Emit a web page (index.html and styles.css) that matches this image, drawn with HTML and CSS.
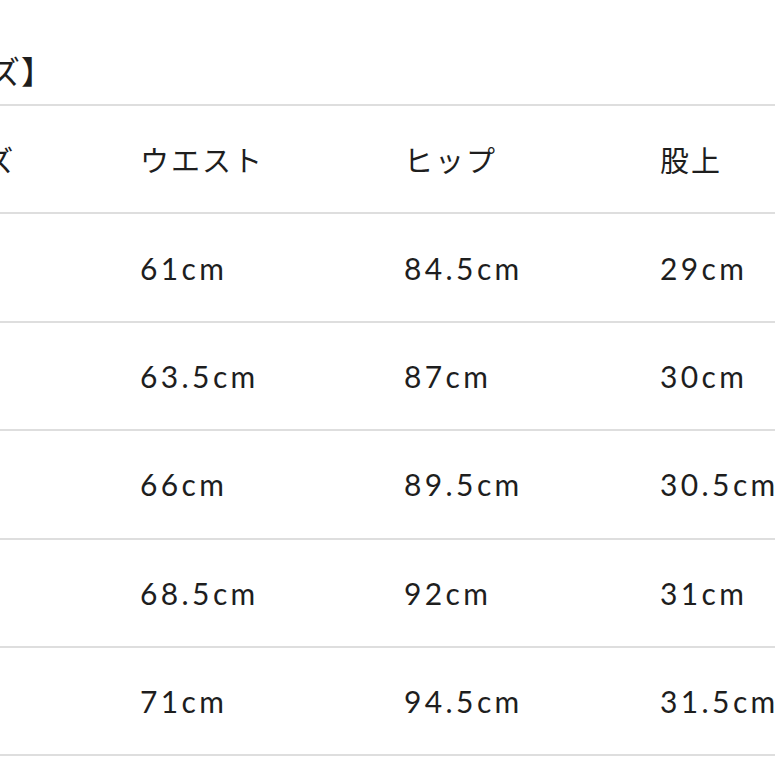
FILE: index.html
```html
<!DOCTYPE html>
<html lang="ja">
<head>
<meta charset="utf-8">
<link rel="stylesheet" href="styles.css">
</head>
<body>
<div class="sheet">
  <h2 class="title">【サイズ】</h2>
  <div class="table">
    <div class="row head">
      <div class="cell c1">サイズ</div>
      <div class="cell">ウエスト</div>
      <div class="cell">ヒップ</div>
      <div class="cell">股上</div>
    </div>
    <div class="row">
      <div class="cell c1">S</div>
      <div class="cell">61cm</div>
      <div class="cell">84.5cm</div>
      <div class="cell">29cm</div>
    </div>
    <div class="row">
      <div class="cell c1">M</div>
      <div class="cell">63.5cm</div>
      <div class="cell">87cm</div>
      <div class="cell">30cm</div>
    </div>
    <div class="row">
      <div class="cell c1">L</div>
      <div class="cell">66cm</div>
      <div class="cell">89.5cm</div>
      <div class="cell">30.5cm</div>
    </div>
    <div class="row">
      <div class="cell c1">XL</div>
      <div class="cell">68.5cm</div>
      <div class="cell">92cm</div>
      <div class="cell">31cm</div>
    </div>
    <div class="row">
      <div class="cell c1">XXL</div>
      <div class="cell">71cm</div>
      <div class="cell">94.5cm</div>
      <div class="cell">31.5cm</div>
    </div>
  </div>
</div>
</body>
</html>
```
FILE: styles.css
```css
html, body {
  margin: 0;
  padding: 0;
  background: #ffffff;
  overflow: hidden;
}
.sheet {
  margin-left: -86px;
  width: 1100px;
  color: #1e1e1e;
  font-family: Lato, "Noto Sans CJK JP", sans-serif;
}
.title {
  margin: 0;
  padding-top: 40px;
  height: 64px;
  line-height: 60px;
  font-size: 32px;
  font-weight: normal;
  letter-spacing: 1px;
  font-family: "Noto Sans CJK JP", sans-serif;
  margin-left: -24px;
}
.table {
  border-top: 2px solid #dedede;
}
.row {
  display: grid;
  grid-template-columns: 226px 264px 256px 1fr;
  height: 108.4px;
  box-sizing: border-box;
  border-bottom: 2px solid #dedede;
  align-items: center;
}
.cell {
  font-size: 30px;
  letter-spacing: 3.4px;
  line-height: 40px;
}
.c1 {
  padding-left: 9px;
}
.head .cell {
  font-family: "Noto Sans CJK JP", sans-serif;
  font-size: 29px;
  letter-spacing: 2px;
}
```
